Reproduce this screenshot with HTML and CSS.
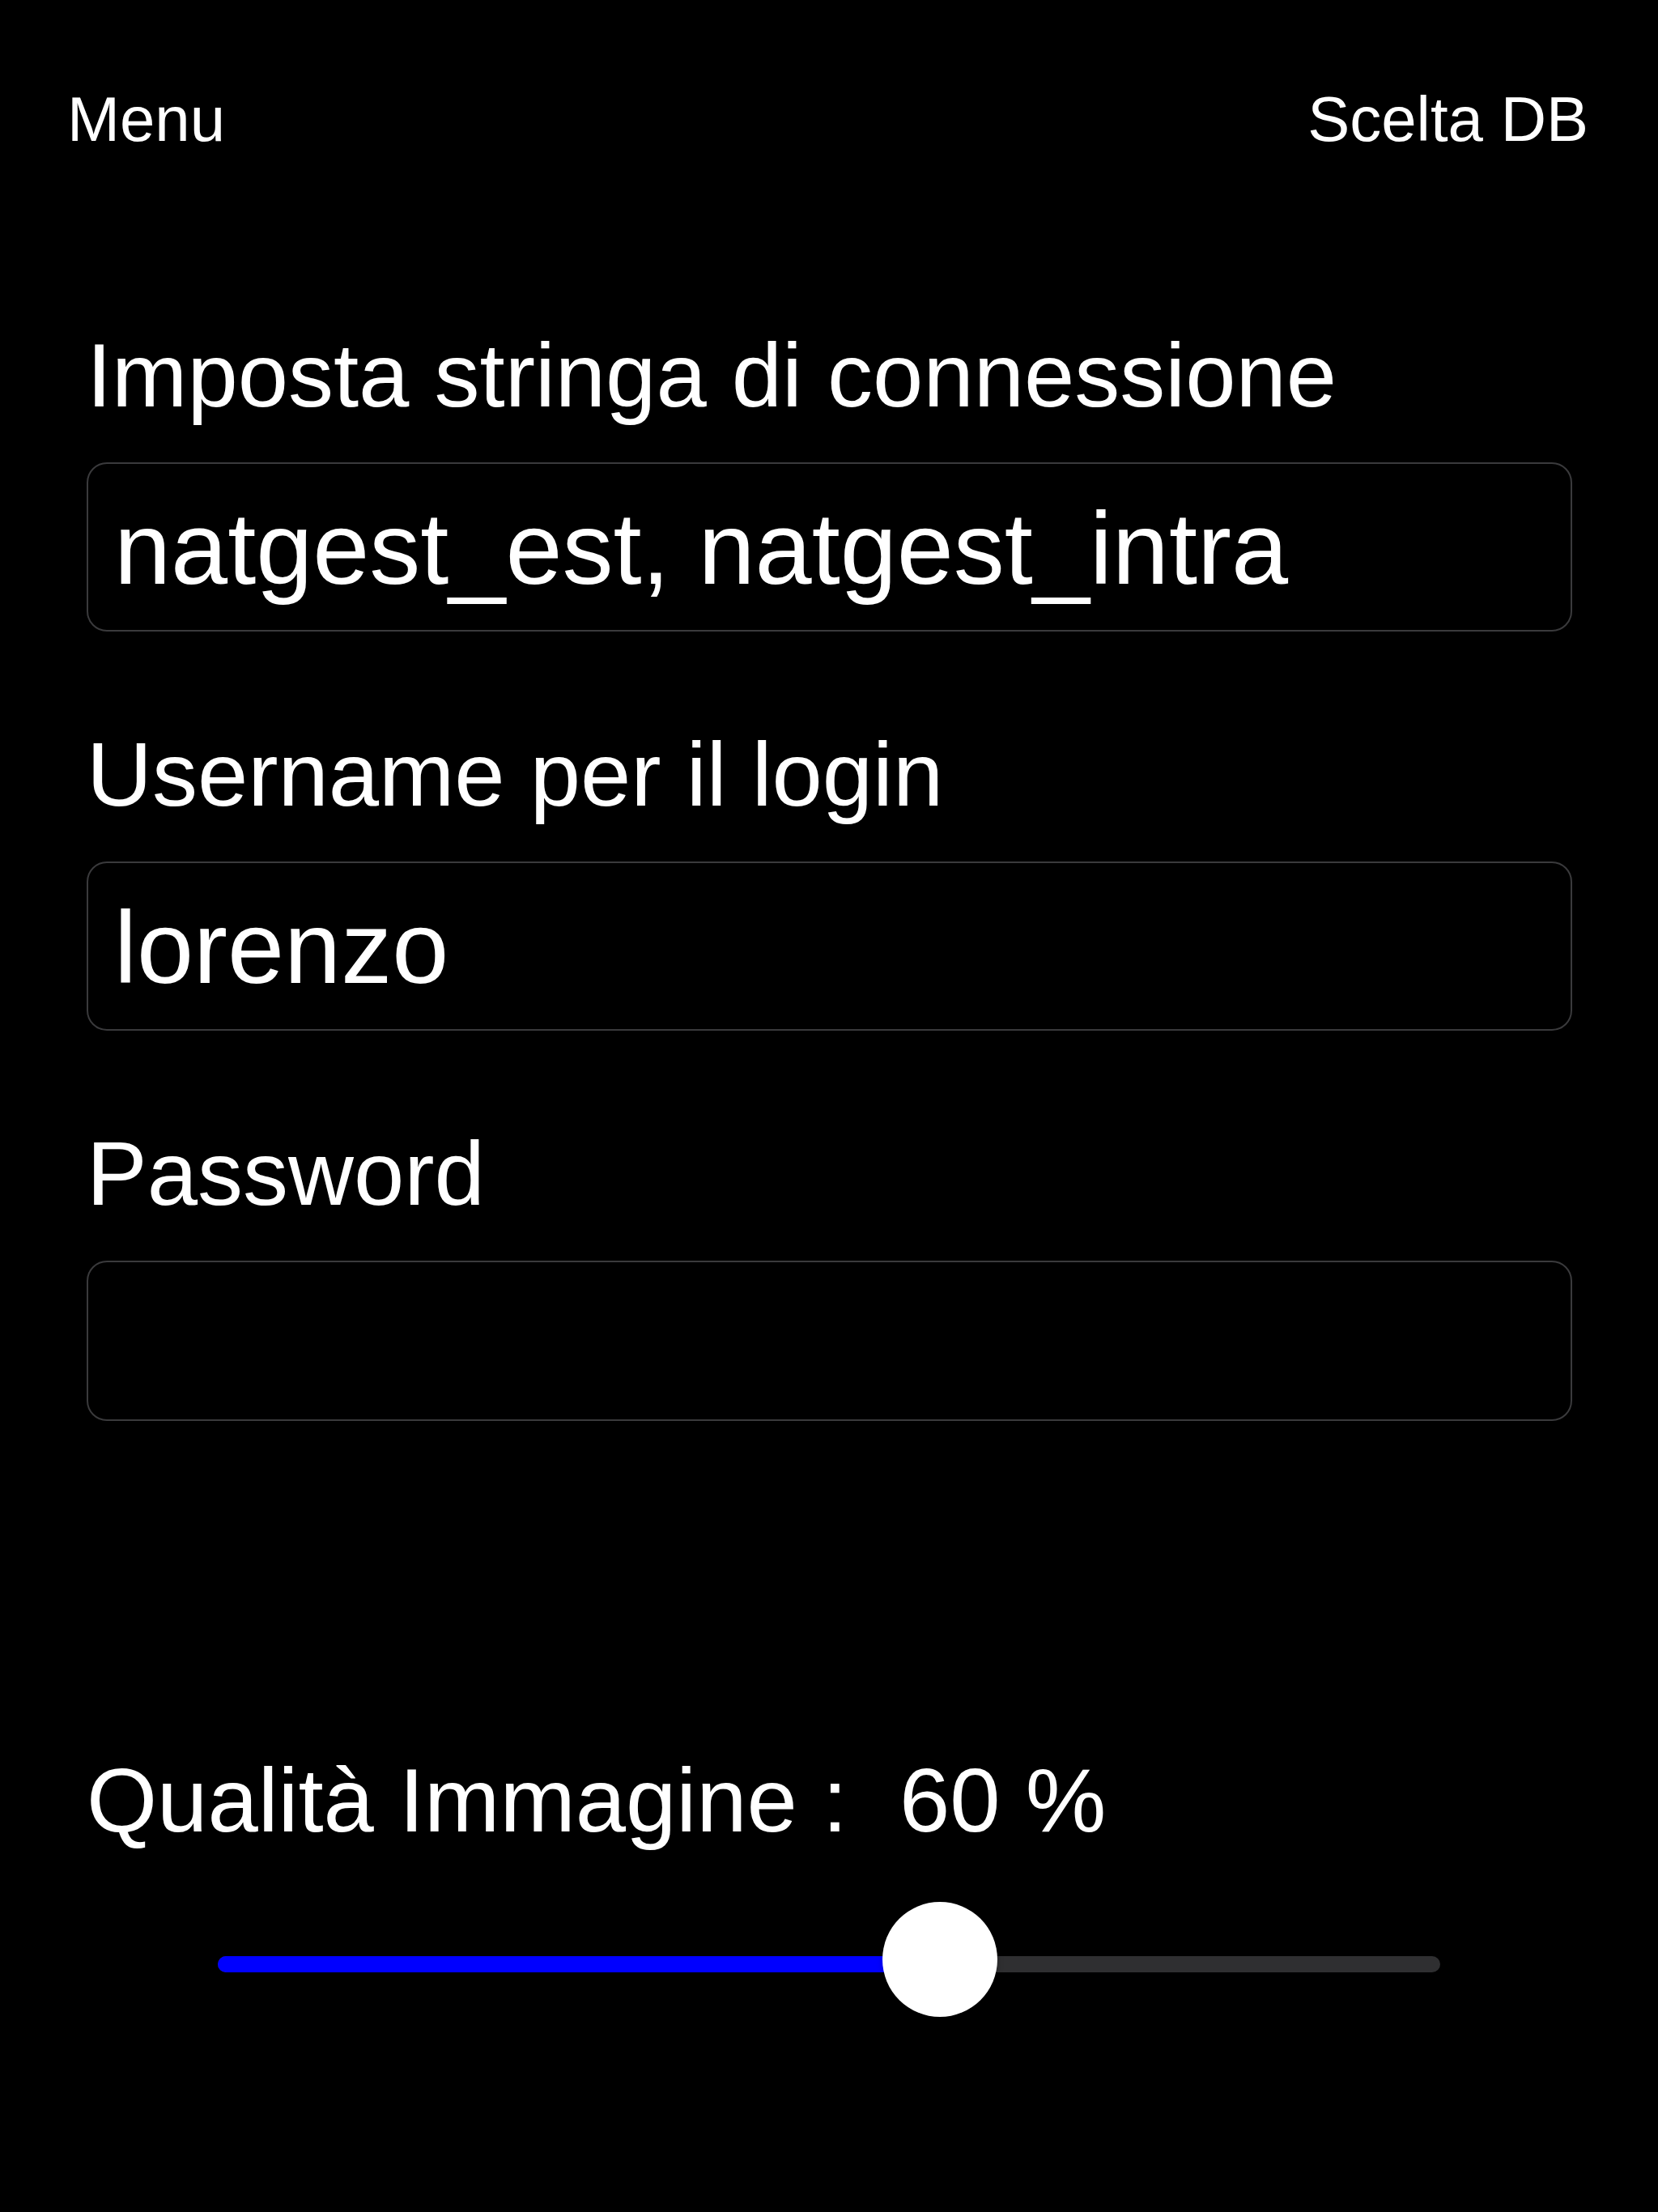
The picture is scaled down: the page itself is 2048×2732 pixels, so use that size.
FILE: index.html
```html
<!DOCTYPE html>
<html lang="it">
<head>
    <meta charset="UTF-8">
    <meta name="viewport" content="width=device-width, initial-scale=1.0">
    <title>Impostazioni</title>
    <link rel="stylesheet" href="styles.css">
</head>
<body>
    <header class="nav">
        <span class="nav-link">Menu</span>
        <span class="nav-link">Scelta DB</span>
    </header>

    <main class="form">
        <div class="field">
            <label class="field-label" for="conn">Imposta stringa di connessione</label>
            <input class="field-input" id="conn" type="text" value="natgest_est, natgest_intra">
        </div>
        <div class="field">
            <label class="field-label" for="user">Username per il login</label>
            <input class="field-input" id="user" type="text" value="lorenzo">
        </div>
        <div class="field">
            <label class="field-label" for="pwd">Password</label>
            <input class="field-input empty" id="pwd" type="password">
        </div>

        <div class="quality">
            <div class="quality-row">
                <span>Qualità Immagine :</span>
                <span class="quality-value">60 %</span>
            </div>
            <div class="slider">
                <div class="slider-track">
                    <div class="slider-fill" style="width: calc(71px + 0.6 * (100% - 142px))"></div>
                </div>
                <div class="slider-thumb" style="left: calc(0.6 * (100% - 142px))"></div>
            </div>
        </div>
    </main>
</body>
</html>
```

FILE: styles.css
```css
body {
    margin: 0;
    background-color: #000;
    color: #fff;
    font-family: "Liberation Sans", Arial, sans-serif;
    min-height: 2732px;
}

.nav {
    display: flex;
    justify-content: space-between;
    padding: 97px 86px 0 83px;
    font-size: 78px;
    line-height: 100px;
}

.form {
    padding: 197px 106px 0 107px;
}

.field {
    display: flex;
    flex-direction: column;
    margin-bottom: 107px;
}

.field-label {
    font-size: 112px;
    line-height: 140px;
    margin-bottom: 37px;
}

.field-input {
    appearance: none;
    box-sizing: border-box;
    width: 100%;
    height: 209px;
    padding: 4px 32px 0;
    margin: 0;
    background: #000;
    color: #fff;
    border: 2px solid #3a3a3c;
    border-radius: 25px;
    font-family: inherit;
    font-size: 126px;
    outline: none;
}

.field-input.empty {
    height: 198px;
}

.field:last-of-type {
    margin-bottom: 0;
}

.quality {
    margin-top: 399px;
}

.quality-row {
    display: flex;
    gap: 64px;
    font-size: 112px;
    line-height: 140px;
}

.slider {
    position: relative;
    box-sizing: border-box;
    height: 142px;
    padding-top: 67px;
    margin: 55px 163px 0 162px;
}

.slider-track {
    height: 20px;
    border-radius: 10px;
    background: #2f2f31;
    overflow: hidden;
}

.slider-fill {
    height: 100%;
    background: #0000ff;
}

.slider-thumb {
    position: absolute;
    top: 0;
    width: 142px;
    height: 142px;
    border-radius: 50%;
    background: #fff;
    box-shadow: 0 3px 8px rgba(0, 0, 0, 0.15);
}
```
